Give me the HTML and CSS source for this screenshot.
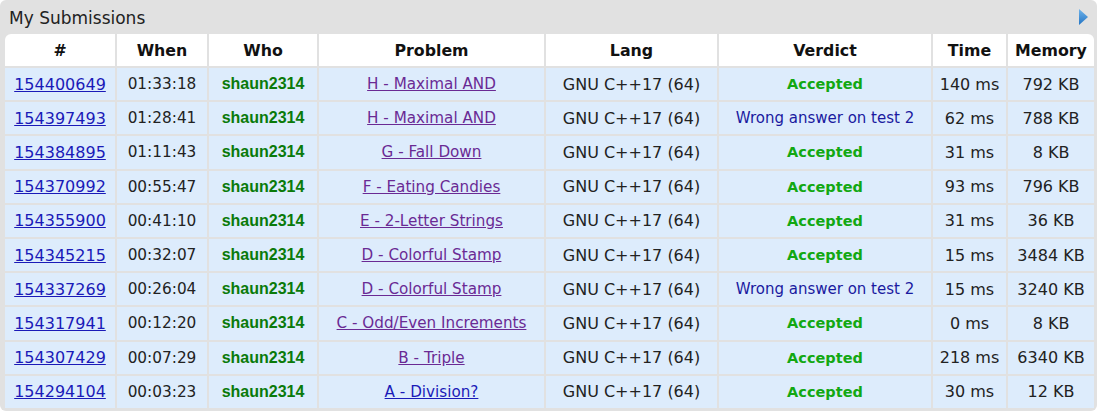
FILE: index.html
```html
<!DOCTYPE html>
<html>
<head>
<meta charset="utf-8">
<link rel="stylesheet" href="styles.css">
</head>
<body>
<div class="roundbox">
  <div class="caption">
    <span class="title">My Submissions</span>
    <svg class="arrow" width="9" height="16" viewBox="0 0 9 16">
      <defs>
        <linearGradient id="ag" x1="0" y1="0" x2="0" y2="1">
          <stop offset="0" stop-color="#6fb3ea"/>
          <stop offset="1" stop-color="#2274c4"/>
        </linearGradient>
      </defs>
      <polygon points="0,0 9,8 0,16" fill="url(#ag)"/>
    </svg>
  </div>
  <table class="status">
    <colgroup>
      <col class="c-id"><col class="c-when"><col class="c-who"><col class="c-prob"><col class="c-lang"><col class="c-verdict"><col class="c-time"><col class="c-mem">
    </colgroup>
    <thead>
      <tr><th class="first">#</th><th>When</th><th>Who</th><th>Problem</th><th>Lang</th><th>Verdict</th><th>Time</th><th class="last">Memory</th></tr>
    </thead>
    <tbody>
      <tr><td><a class="sid" href="#">154400649</a></td><td class="when">01:33:18</td><td class="who">shaun2314</td><td class="problem"><a class="prob" href="#">H - Maximal AND</a></td><td>GNU C++17 (64)</td><td class="ok">Accepted</td><td>140&nbsp;ms</td><td>792&nbsp;KB</td></tr>
      <tr><td><a class="sid" href="#">154397493</a></td><td class="when">01:28:41</td><td class="who">shaun2314</td><td class="problem"><a class="prob" href="#">H - Maximal AND</a></td><td>GNU C++17 (64)</td><td class="wa">Wrong answer on test 2</td><td>62&nbsp;ms</td><td>788&nbsp;KB</td></tr>
      <tr><td><a class="sid" href="#">154384895</a></td><td class="when">01:11:43</td><td class="who">shaun2314</td><td class="problem"><a class="prob" href="#">G - Fall Down</a></td><td>GNU C++17 (64)</td><td class="ok">Accepted</td><td>31&nbsp;ms</td><td>8&nbsp;KB</td></tr>
      <tr><td><a class="sid" href="#">154370992</a></td><td class="when">00:55:47</td><td class="who">shaun2314</td><td class="problem"><a class="prob" href="#">F - Eating Candies</a></td><td>GNU C++17 (64)</td><td class="ok">Accepted</td><td>93&nbsp;ms</td><td>796&nbsp;KB</td></tr>
      <tr><td><a class="sid" href="#">154355900</a></td><td class="when">00:41:10</td><td class="who">shaun2314</td><td class="problem"><a class="prob" href="#">E - 2-Letter Strings</a></td><td>GNU C++17 (64)</td><td class="ok">Accepted</td><td>31&nbsp;ms</td><td>36&nbsp;KB</td></tr>
      <tr><td><a class="sid" href="#">154345215</a></td><td class="when">00:32:07</td><td class="who">shaun2314</td><td class="problem"><a class="prob" href="#">D - Colorful Stamp</a></td><td>GNU C++17 (64)</td><td class="ok">Accepted</td><td>15&nbsp;ms</td><td>3484&nbsp;KB</td></tr>
      <tr><td><a class="sid" href="#">154337269</a></td><td class="when">00:26:04</td><td class="who">shaun2314</td><td class="problem"><a class="prob" href="#">D - Colorful Stamp</a></td><td>GNU C++17 (64)</td><td class="wa">Wrong answer on test 2</td><td>15&nbsp;ms</td><td>3240&nbsp;KB</td></tr>
      <tr><td><a class="sid" href="#">154317941</a></td><td class="when">00:12:20</td><td class="who">shaun2314</td><td class="problem"><a class="prob" href="#">C - Odd/Even Increments</a></td><td>GNU C++17 (64)</td><td class="ok">Accepted</td><td>0&nbsp;ms</td><td>8&nbsp;KB</td></tr>
      <tr><td><a class="sid" href="#">154307429</a></td><td class="when">00:07:29</td><td class="who">shaun2314</td><td class="problem"><a class="prob" href="#">B - Triple</a></td><td>GNU C++17 (64)</td><td class="ok">Accepted</td><td>218&nbsp;ms</td><td>6340&nbsp;KB</td></tr>
      <tr><td><a class="sid" href="#">154294104</a></td><td class="when">00:03:23</td><td class="who">shaun2314</td><td class="problem"><a class="prob prob-new" href="#">A - Division?</a></td><td>GNU C++17 (64)</td><td class="ok">Accepted</td><td>30&nbsp;ms</td><td>12&nbsp;KB</td></tr>
    </tbody>
  </table>
</div>
</body>
</html>
```
FILE: styles.css
```css
html, body {
  margin: 0;
  padding: 0;
  background: #ffffff;
}

body {
  font-family: "DejaVu Sans", Verdana, sans-serif;
  color: #222222;
}

.roundbox {
  width: 1097px;
  height: 411px;
  box-sizing: border-box;
  background: #e1e1e1;
  border-radius: 6px;
  padding: 0 1px 3px 3px;
}

.caption {
  display: flex;
  justify-content: space-between;
  align-items: center;
  height: 32px;
  box-sizing: border-box;
  padding: 0 8px 0 6px;
}

.title {
  font-size: 17px;
  line-height: 28px;
  padding-top: 4px;
  color: #222222;
}

.arrow {
  display: block;
  margin-top: 2px;
}

.status {
  width: 1093px;
  table-layout: fixed;
  border-collapse: separate;
  border-spacing: 2px;
  font-size: 16px;
}

.c-id { width: 110px; }
.c-when { width: 90px; }
.c-who { width: 108px; }
.c-prob { width: 225px; }
.c-lang { width: 171px; }
.c-verdict { width: 212px; }
.c-time { width: 73px; }
.c-mem { width: 86px; }

.status th,
.status td {
  padding: 0;
  text-align: center;
  vertical-align: middle;
  white-space: nowrap;
  overflow: hidden;
}

.status th {
  height: 32px;
  background: #ffffff;
  font-weight: bold;
  font-size: 15.8px;
  color: #111111;
}

.status th.first {
  border-top-left-radius: 6px;
}

.status th.last {
  border-top-right-radius: 6px;
}

.status td {
  height: 32.2px;
  background: #ddecfc;
  color: #222222;
}

.sid {
  color: #1a1ab8;
  text-decoration: underline;
}

.status td.when {
  font-size: 15.3px;
}

.status td.problem {
  font-size: 15.2px;
}

.prob {
  color: #6a2a94;
  text-decoration: underline;
}

.prob-new {
  color: #1a1ab8;
}

.status td.who {
  font-family: "Liberation Sans", Arial, sans-serif;
  color: #0a7a0a;
  font-weight: bold;
  font-size: 16px;
}

.status td.ok {
  color: #12a812;
  font-weight: bold;
  font-size: 14.5px;
}

.status td.wa {
  color: #1a1aa0;
  font-size: 15px;
}
```
